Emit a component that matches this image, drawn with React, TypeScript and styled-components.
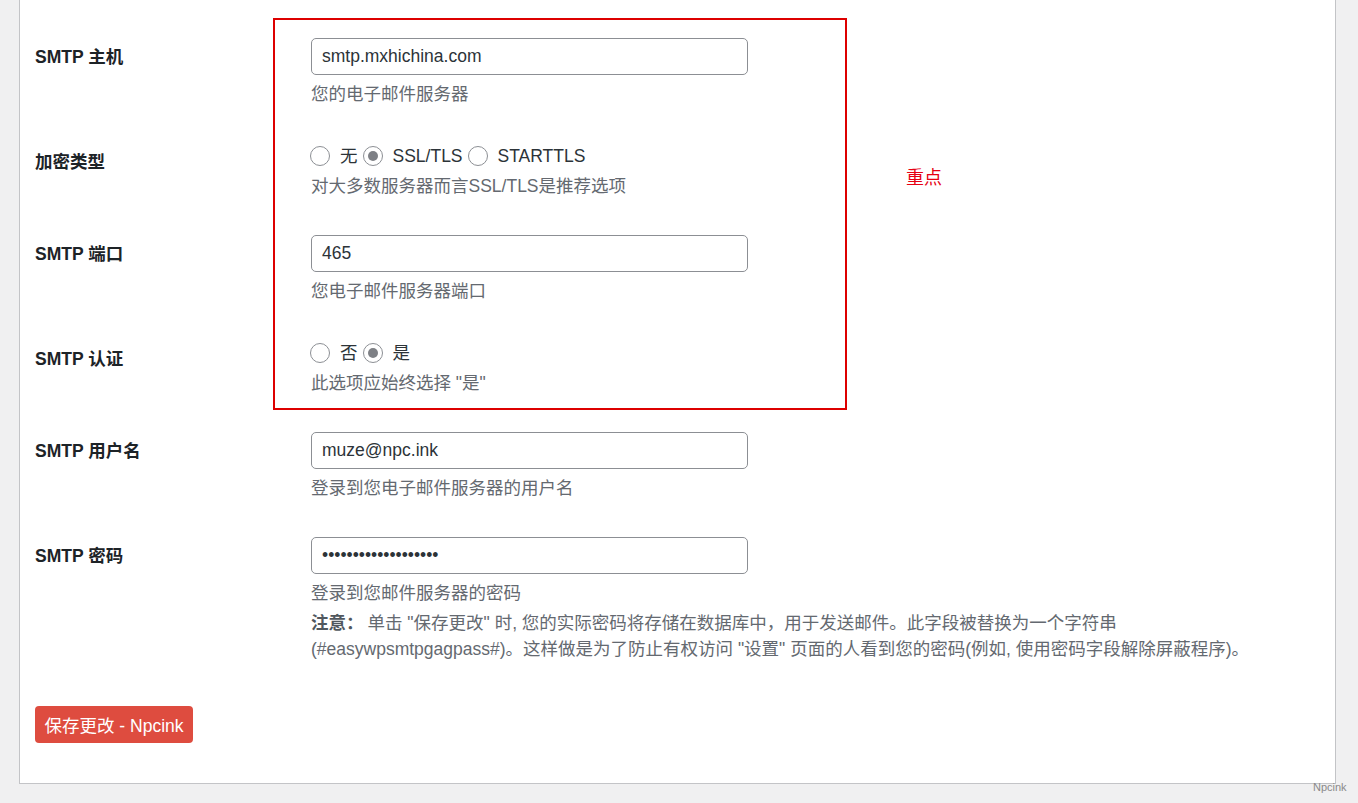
import React from "react";
import styled, { createGlobalStyle } from "styled-components";

const GlobalStyle = createGlobalStyle`
  html, body { margin: 0; padding: 0; }
  body {
    background: #f0f0f1;
    font-family: "Liberation Sans", "Noto Sans CJK SC", sans-serif;
    font-size: 17.5px;
    color: #2c3338;
  }
  * { box-sizing: border-box; }
`;

const Page = styled.div`
  position: relative;
  height: 803px;
  padding-left: 19px;
  overflow: hidden;
`;

const Panel = styled.div`
  width: 1317px;
  height: 784px;
  background: #fff;
  border: 1px solid #c3c4c7;
  border-top: none;
  padding: 20.5px 0 0 15px;
`;

const Row = styled.div`
  display: grid;
  grid-template-columns: 276px 1fr;
`;

const Label = styled.div`
  padding-top: 25px;
  line-height: 22.75px;
  font-weight: 700;
  color: #1d2327;
`;

const Cell = styled.div`
  padding: 17.5px 0;
`;

const TextInput = styled.input`
  display: block;
  width: 437px;
  height: 37px;
  margin: 0;
  border: 1px solid #8c8f94;
  border-radius: 5px;
  padding: 0 10px;
  font-family: inherit;
  font-size: 17.5px;
  color: #2c3338;
  background: #fff;
  outline: none;
`;

const Desc = styled.p<{ $after?: "input" | "radio" }>`
  margin: ${(p) => (p.$after === "radio" ? "3px" : "5px")} 0 0;
  line-height: 28px;
  color: #646970;
`;

const Note = styled.p`
  margin: 3px 0 0;
  line-height: 26px;
  color: #646970;
  max-width: 950px;
`;

const NoteLead = styled.b`
  display: inline-block;
  margin-right: 4px;
  white-space: nowrap;
  color: #50575e;
  font-weight: 700;
`;

const RadioGroup = styled.div`
  display: flex;
  align-items: center;
  height: 26px;
  gap: 5px;
  margin-left: -1px;
`;

const RadioOption = styled.label`
  display: flex;
  align-items: center;
  gap: 10px;
  line-height: 26px;
  color: #2c3338;
`;

const RadioCircle = styled.span<{ $checked?: boolean }>`
  position: relative;
  display: inline-block;
  width: 20px;
  height: 20px;
  border: 1px solid #8c8f94;
  border-radius: 50%;
  background: #fff;
  &::after {
    content: "";
    display: ${(p) => (p.$checked ? "block" : "none")};
    position: absolute;
    left: 4px;
    top: 4px;
    width: 10px;
    height: 10px;
    border-radius: 50%;
    background: #7e8085;
  }
`;

const Submit = styled.div`
  padding-top: 26.5px;
`;

const Button = styled.button`
  height: 37px;
  width: 158px;
  border: none;
  border-radius: 4px;
  background: #de4c3f;
  color: #fff;
  font-family: inherit;
  font-size: 17.5px;
  padding: 0;
`;

const Highlight = styled.div`
  position: absolute;
  left: 273px;
  top: 18px;
  width: 574px;
  height: 392px;
  border: 2px solid #dd0000;
  pointer-events: none;
`;

const HighlightNote = styled.div`
  position: absolute;
  left: 906px;
  top: 164px;
  font-size: 18px;
  line-height: 24px;
  color: #e60012;
  font-family: "Noto Sans CJK SC", sans-serif;
`;

const Watermark = styled.div`
  position: absolute;
  left: 1313px;
  top: 780px;
  font-size: 11px;
  line-height: 14px;
  color: #8a8a8a;
  font-family: "Liberation Sans", sans-serif;
`;

type Opt = { label: string; checked?: boolean };

const Radios = ({ options }: { options: Opt[] }) => (
  <RadioGroup>
    {options.map((o) => (
      <RadioOption key={o.label}>
        <RadioCircle $checked={o.checked} />
        {o.label}
      </RadioOption>
    ))}
  </RadioGroup>
);

export default function App() {
  return (
    <>
      <GlobalStyle />
      <Page>
        <Panel>
          <Row>
            <Label>SMTP 主机</Label>
            <Cell>
              <TextInput defaultValue="smtp.mxhichina.com" />
              <Desc>您的电子邮件服务器</Desc>
            </Cell>
          </Row>
          <Row>
            <Label>加密类型</Label>
            <Cell>
              <Radios
                options={[
                  { label: "无" },
                  { label: "SSL/TLS", checked: true },
                  { label: "STARTTLS" },
                ]}
              />
              <Desc $after="radio">对大多数服务器而言SSL/TLS是推荐选项</Desc>
            </Cell>
          </Row>
          <Row>
            <Label>SMTP 端口</Label>
            <Cell>
              <TextInput defaultValue="465" />
              <Desc>您电子邮件服务器端口</Desc>
            </Cell>
          </Row>
          <Row>
            <Label>SMTP 认证</Label>
            <Cell>
              <Radios options={[{ label: "否" }, { label: "是", checked: true }]} />
              <Desc $after="radio">此选项应始终选择 "是"</Desc>
            </Cell>
          </Row>
          <Row>
            <Label>SMTP 用户名</Label>
            <Cell>
              <TextInput defaultValue="muze@npc.ink" />
              <Desc>登录到您电子邮件服务器的用户名</Desc>
            </Cell>
          </Row>
          <Row>
            <Label>SMTP 密码</Label>
            <Cell>
              <TextInput type="password" defaultValue="1234567890123456789" />
              <Desc>登录到您邮件服务器的密码</Desc>
              <Note>
                <NoteLead>注意：</NoteLead>单击 "保存更改" 时, 您的实际密码将存储在数据库中，用于发送邮件。此字段被替换为一个字符串
                (#easywpsmtpgagpass#)。这样做是为了防止有权访问 "设置" 页面的人看到您的密码(例如, 使用密码字段解除屏蔽程序)。
              </Note>
            </Cell>
          </Row>
          <Submit>
            <Button>保存更改 - Npcink</Button>
          </Submit>
        </Panel>
        <Highlight />
        <HighlightNote>重点</HighlightNote>
        <Watermark>Npcink</Watermark>
      </Page>
    </>
  );
}
